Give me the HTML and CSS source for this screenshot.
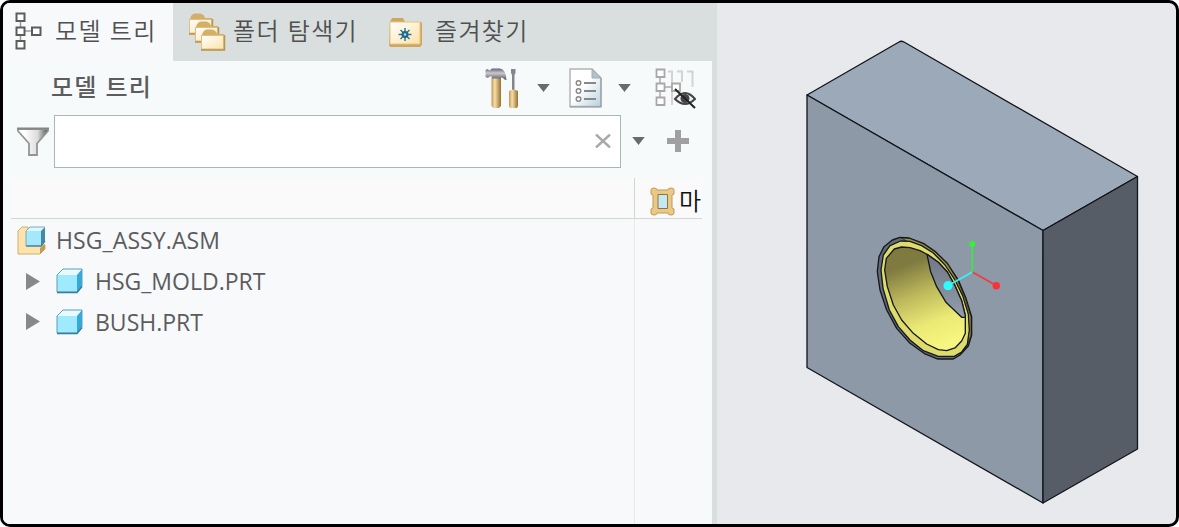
FILE: index.html
```html
<!DOCTYPE html>
<html lang="ko">
<head>
    <meta charset="UTF-8">
    <meta name="viewport" content="width=device-width, initial-scale=1.0">
    <title>모델 트리</title>
    <link rel="stylesheet" href="styles.css">
</head>
<body>
    <div class="window">
        <div class="panel">
            <div class="tabs">
                <div class="tab active">
                    <svg class="icon-tree" width="27" height="38" viewBox="0 0 27 38">
                        <path d="M5.500 9v6M5.500 23v6M10 19h7" stroke="#999" stroke-width="1.500" fill="none"/>
                        <path d="M1.500 1.500h8v7.500h-8zM1.500 15.500h8v7.500h-8zM1.500 29h8v7.500h-8zM17 15.500h8.500V23H17z" stroke="#5c5c5c" stroke-width="2" fill="#fff"/>
                    </svg>
                    <span>모델 트리</span>
                </div>
                <div class="tab tab-folder">
                    <svg class="icon-folders" width="38" height="38" viewBox="0 0 38 38">
                        <defs>
                            <linearGradient id="paper" x1="0" y1="0" x2="1" y2="1">
                                <stop offset="0" stop-color="#fff"/>
                                <stop offset="1" stop-color="#fde2a8"/>
                            </linearGradient>
                            <g id="folder">
                                <path d="M2 6Q3 1 7 .5h5Q16 1 17 5h7v16H1V6z" fill="#d3b06a"/>
                                <path d="M1.500 6.500h22V20h-22z" fill="url(#paper)" stroke="#e2bf7c"/>
                                <path d="M1 21h23.500V6" fill="none" stroke="#b8954f" stroke-width="1.500"/>
                            </g>
                        </defs>
                        <use href="#folder"/>
                        <use href="#folder" x="6" y="8"/>
                        <use href="#folder" x="12" y="16"/>
                    </svg>
                    <span>폴더 탐색기</span>
                </div>
                <div class="tab tab-fav">
                    <svg class="icon-fav" width="35" height="32" viewBox="0 0 35 32">
                        <path d="M2 5l2-4h11l2 4h16l1 1v22l-2 2H2l-1-2z" fill="#cda75f"/>
                        <path d="M2 5h30v22H2z" fill="url(#paper)" stroke="#e7c27c"/>
                        <path d="M17 11v13M10.500 17.500h13M12.500 13l9 9M21.500 13l-9 9" stroke="#2c7894" stroke-width="1.500"/>
                        <circle cx="17" cy="17.500" r="3.500" fill="#1c6a8c"/>
                        <circle cx="17" cy="17.500" r="1.200" fill="#b8dce8"/>
                    </svg>
                    <span>즐겨찾기</span>
                </div>
            </div>

            <div class="content">
                <div class="toolbar">
                    <h2>모델 트리</h2>
                    <svg class="icon-tools" width="34" height="41" viewBox="0 0 34 41">
                        <defs>
                            <linearGradient id="wood">
                                <stop offset="0" stop-color="#c29750"/>
                                <stop offset=".35" stop-color="#f7dfaa"/>
                                <stop offset="1" stop-color="#97702f"/>
                            </linearGradient>
                            <linearGradient id="steel" x1="0" y1="0" x2="0" y2="1">
                                <stop offset="0" stop-color="#65656f"/>
                                <stop offset=".4" stop-color="#c9c9d2"/>
                                <stop offset="1" stop-color="#55555f"/>
                            </linearGradient>
                        </defs>
                        <path d="M6.500 9h9.500v29l-2 2H8.500l-2-2z" fill="url(#wood)"/>
                        <path d="M.5 2l2-1 2 1.500L7 .5h8q6 1 6.500 11.500l-2-.5q-1-2-4-2v1H7V8.500H4.500L3 10 .5 9z" fill="url(#steel)"/>
                        <path d="M26 1h4.500v4l-1 2v15h-2.500V7l-1-2z" fill="#85858f"/>
                        <path d="M24 23q4.500-3 9 0v15l-1 2h-7l-1-2z" fill="url(#wood)"/>
                    </svg>
                    <svg class="caret caret-tools" width="13" height="8" viewBox="0 0 14 9"><path d="M0 0h14L7 9z"/></svg>
                    <svg class="icon-doc" width="33" height="40" viewBox="0 0 33 40">
                        <defs>
                            <linearGradient id="sheet" x1="0" y1="0" x2="1" y2="1">
                                <stop offset=".45" stop-color="#fff"/>
                                <stop offset="1" stop-color="#b6d0df"/>
                            </linearGradient>
                        </defs>
                        <path d="M1 1h22l9 9v28.500H1z" fill="url(#sheet)" stroke="#b4b4b4" stroke-width="1.500"/>
                        <path d="M1 39h31V10" fill="none" stroke="#999"/>
                        <path d="M23 1v9h9z" fill="#adc4d0" stroke="#aaa"/>
                        <path d="M15 15h12M15 23h12M15 31h12" stroke="#888" stroke-width="1.800"/>
                        <g fill="#fff" stroke="#888" stroke-width="1.400">
                            <circle cx="9.500" cy="15" r="2.300"/>
                            <circle cx="9.500" cy="23" r="2.300"/>
                            <circle cx="9.500" cy="31" r="2.300"/>
                        </g>
                    </svg>
                    <svg class="caret caret-doc" width="13" height="8" viewBox="0 0 14 9"><path d="M0 0h14L7 9z"/></svg>
                    <svg class="icon-hide" width="41" height="41" viewBox="0 0 41 41">
                        <path d="M13 3.500h5M22 3.500h6M32 3.500h5.500V19M17 3v34M27 3v11" fill="none" stroke="#d3d3d3" stroke-width="2"/>
                        <path d="M5 9v6M5 23v6M10 19h7" stroke="#aaa" stroke-width="1.500"/>
                        <path d="M1.500 1.500h8v7.500h-8zM1.500 15.500h8V23h-8zM1.500 29.500h8V37h-8zM17 15.500h8V23h-8z" fill="#fff" stroke="#a8a8a8" stroke-width="1.800"/>
                        <path d="M20 31q10-12 20 0q-10 10-20 0z" fill="#eee" stroke="#444" stroke-width="2"/>
                        <circle cx="30" cy="30.500" r="4.500" fill="#444"/>
                        <path d="M20 21l20 19" stroke="#222" stroke-width="2"/>
                    </svg>
                </div>

                <div class="filter">
                    <svg class="icon-funnel" width="32" height="30" viewBox="0 0 32 30">
                        <defs>
                            <linearGradient id="funnel">
                                <stop offset=".2" stop-color="#fff"/>
                                <stop offset=".65" stop-color="#ddd"/>
                                <stop offset="1" stop-color="#555"/>
                            </linearGradient>
                        </defs>
                        <path d="M1 2h30v2L20 16.500V28h-8V16.500L1 4z" fill="url(#funnel)" stroke="#959595" stroke-width="1.800"/>
                        <path d="M0 1.500h32" stroke="#858585" stroke-width="2"/>
                    </svg>
                    <div class="search">
                        <svg width="16" height="14" viewBox="0 0 16 14"><path d="M1 .5l14 13M15 .5l-14 13" stroke="#aaa" stroke-width="2.500"/></svg>
                    </div>
                    <svg class="caret caret-search" width="13" height="8" viewBox="0 0 14 9"><path d="M0 0h14L7 9z"/></svg>
                    <svg class="icon-plus" width="22" height="22" viewBox="0 0 22 22"><path d="M8 0h6v8h8v6h-8v8H8v-8H0V8h8z" fill="#a0a0a0"/></svg>
                </div>

                <div class="table">
                    <div class="thead">
                        <div class="col-name"></div>
                        <div class="col-mark">
                            <svg width="25" height="29" viewBox="0 0 25 29">
                                <path d="M1 3q0-2 3-2t3 2h11q0-2 3-2t3 2v4l-2 1v13l2 1v4q0 2-3 2t-3-2H7q0 2-3 2t-3-2v-4l2-1V8L1 7z" fill="#ebc984" stroke="#c29a54"/>
                                <path d="M8 7.500h9.500v14H8z" fill="#c3e9f3" stroke="#8b7448"/>
                            </svg>
                            <span>마</span>
                        </div>
                    </div>
                    <div class="tbody">
                        <div class="col-name">
                            <div class="row root">
                                <svg width="29" height="29" viewBox="0 0 29 29">
                                    <path d="M1 5l4-4h6v18h17v4l-5 5H1z" fill="#fde3ae" stroke="#d5ad68"/>
                                    <path d="M23 28l5-5v-5l-5 4z" fill="#c29d57"/>
                                    <path d="M9 5l4-4h15l-4 4z" fill="#dcf7ff"/>
                                    <path d="M9 5h15v15H9z" fill="#a5e8fb"/>
                                    <path d="M24 5l4-4v14l-4 5z" fill="#438aa9"/>
                                    <path d="M9 20h15l4-5" fill="none" stroke="#477f9c" stroke-width="1.500"/>
                                    <path d="M9 20V5l4-4h15" fill="none" stroke="#78abc0"/>
                                </svg>
                                <span>HSG_ASSY.ASM</span>
                            </div>
                            <div class="row">
                                <svg class="expand" width="14" height="17" viewBox="0 0 15 18"><path d="M0 0l15 9-15 9z"/></svg>
                                <svg width="27" height="26" viewBox="0 0 27 26">
                                    <defs>
                                        <g id="part">
                                            <path d="M1 7l6-6h19l-5 6z" fill="#e8faff"/>
                                            <path d="M1 7h20v17H1z" fill="#9feafd"/>
                                            <path d="M21 7l5-6v17l-5 6z" fill="#32abdc"/>
                                            <path d="M1 24V7l6-6h19v17l-5 6z" fill="none" stroke="#5c9fb9"/>
                                            <path d="M1 24.500h20l5-6" fill="none" stroke="#367e9d" stroke-width="1.500"/>
                                        </g>
                                    </defs>
                                    <use href="#part"/>
                                </svg>
                                <span>HSG_MOLD.PRT</span>
                            </div>
                            <div class="row">
                                <svg class="expand" width="14" height="17" viewBox="0 0 15 18"><path d="M0 0l15 9-15 9z"/></svg>
                                <svg width="27" height="26" viewBox="0 0 27 26"><use href="#part"/></svg>
                                <span>BUSH.PRT</span>
                            </div>
                        </div>
                        <div class="col-mark"></div>
                    </div>
                </div>
            </div>
        </div>

        <svg class="viewport" width="459" height="521" viewBox="717 3 459 521">
            <defs>
                <linearGradient id="bore" x1=".3" y1="0" x2=".6" y2="1">
                    <stop offset=".15" stop-color="#7f7a40"/>
                    <stop offset=".45" stop-color="#bdb95c"/>
                    <stop offset=".75" stop-color="#ebea76"/>
                    <stop offset="1" stop-color="#f6f680"/>
                </linearGradient>
                <linearGradient id="hole" x1="0" y1="0" x2="0" y2="1">
                    <stop offset="0" stop-color="#6e7785"/>
                    <stop offset="1" stop-color="#929eac"/>
                </linearGradient>
            </defs>
            <!-- housing block -->
            <g stroke="#111418" stroke-width="1.300" stroke-linejoin="round">
                <path d="M807 95l92-53q2-1.500 5 0l233.500 134.500L1043 230.500z" fill="#9ca9b9"/>
                <path d="M807 95l236 135.500V503L807 367.500z" fill="#8d99a7"/>
                <path d="M1043 230.500l94.500-54V449L1043 503z" fill="#575d67"/>
            </g>
            <!-- bush -->
            <g transform="translate(860 220) scale(.3333)" stroke="#16181a" stroke-width="4" stroke-linejoin="round">
                <path d="M120 52L148 54 190 70 225 94 262 130 295 180 318 235 335 290 335 345 325 378 300 405 280 417 232 417 195 402 150 370 110 325 80 270 60 210 52 155 57 110 72 80 97 60z" fill="#626c79"/>
                <path d="M125 54L150 56 190 72 225 96 262 132 293 182 316 237 333 292 333 345 322 375 305 398 310 300 230 120z" fill="#9b9744" stroke-width="2"/>
                <path d="M122 63L150 64 185 77 220 99 255 135 285 180 308 227 325 282 328 330 322 373 305 396 283 409 235 409 190 392 150 360 115 320 88 270 69 205 63 150 70 105 90 77z" fill="#dedc6c"/>
                <path d="M103 87L125 81 150 83 180 92 205 105 235 127 262 156 285 197 305 242 316 287 316 340 305 363 285 384 260 392 235 389 200 372 160 340 125 300 100 255 82 200 74 150 79 115z" fill="url(#bore)"/>
                <path d="M201 103L235 127 262 156 285 197 305 242 316 287V292H305L258 247 230 200 212 155z" fill="url(#hole)"/>
            </g>
            <!-- csys -->
            <g stroke-width="1.600">
                <path d="M972.300 272v-27" stroke="#33ee3a"/>
                <path d="M972.300 272l24 13.500" stroke="#f23a3f"/>
                <path d="M972.300 272l-24 13.500" stroke="#33f5f8"/>
            </g>
            <circle cx="972.300" cy="244" r="3" fill="#2cf531"/>
            <circle cx="996.300" cy="285.700" r="3.700" fill="#f93236"/>
            <circle cx="948" cy="285.700" r="4.600" fill="#2cfbff"/>
        </svg>
    </div>
</body>
</html>
```
FILE: styles.css
```css
* {
    box-sizing: border-box;
}

body {
    margin: 0;
    background: #fff;
    font-family: "Noto Sans CJK KR", sans-serif;
    color: #5c5c5c;
}

svg {
    display: block;
    flex: none;
}

.window {
    display: flex;
    width: 1179px;
    height: 527px;
    border: 3px solid #000;
    border-radius: 10px;
    overflow: hidden;
    background: #e8e9ed;
}

.panel {
    width: 714px;
    background: #d9dfde;
}

.tabs {
    display: flex;
    height: 58px;
}

.tab {
    display: flex;
    align-items: center;
    white-space: nowrap;
    font-size: 24px;
    font-weight: 350;
    line-height: 54px;
    letter-spacing: 1.3px;
    color: #505050;
}

.tab span {
    margin-top: -4px;
}

.icon-tree {
    margin-top: -2px;
}

.active {
    width: 170px;
    padding-left: 12px;
    gap: 13px;
    background: #f7f9fb;
}

.tab-folder {
    width: 215px;
    padding-left: 15px;
    gap: 7px;
}

.icon-folders {
    margin-top: -1px;
}

.tab-fav {
    gap: 12px;
}

.icon-fav {
    margin-top: 2px;
}

.content {
    width: 709px;
    height: 463px;
    background: #f6fafb;
}

.toolbar {
    display: flex;
    height: 54px;
    padding: 7px 0 0 48px;
}

.toolbar h2 {
    width: 434px;
    margin: -1px 0 0;
    font-size: 24px;
    font-weight: 500;
    line-height: 38px;
    letter-spacing: 1.2px;
}

.caret {
    fill: #6a6a6a;
}

.caret-tools {
    margin: 16px 19px 0 18px;
}

.caret-doc {
    margin: 16px 24px 0 16px;
}

.filter {
    display: flex;
    height: 63px;
    padding-left: 14px;
}

.icon-funnel {
    margin: 12px 5px 0 0;
}

.search {
    display: flex;
    justify-content: flex-end;
    width: 567px;
    height: 53px;
    padding: 18px 9px 0 0;
    border: 1px solid #a9b7b7;
    background: #fff;
}

.caret-search {
    margin: 22px 22px 0 11px;
}

.icon-plus {
    margin-top: 15px;
}

.table {
    width: 691px;
    margin-left: 8px;
}

.thead,
.tbody {
    display: flex;
}

.thead {
    height: 41px;
    border-bottom: 1px solid #d3d6d6;
    background: #fafafa;
}

.tbody {
    height: 305px;
    background: #f7f9fb;
}

.col-name {
    width: 624px;
    border-right: 1px solid #d3d6d6;
}

.tbody .col-name {
    border-color: #e6e9eb;
}

.col-mark {
    display: flex;
    align-items: center;
    gap: 4px;
    padding: 6px 0 0 15px;
    overflow: hidden;
    font-size: 24px;
    font-weight: 350;
    line-height: 34px;
    color: #111;
}

.col-mark span {
    margin-top: -3px;
}

.row {
    display: flex;
    align-items: center;
    height: 40.5px;
    padding-left: 15px;
    font-family: "Open Sans", "Noto Sans", sans-serif;
    font-size: 23px;
    font-weight: 400;
    letter-spacing: 0;
}

.row span {
    margin-left: 12px;
}

.root {
    height: 42px;
    padding-left: 6px;
    letter-spacing: 0.1px;
}

.root span {
    margin-left: 10px;
}

.expand {
    margin-right: 16px;
    fill: #888;
}
```
